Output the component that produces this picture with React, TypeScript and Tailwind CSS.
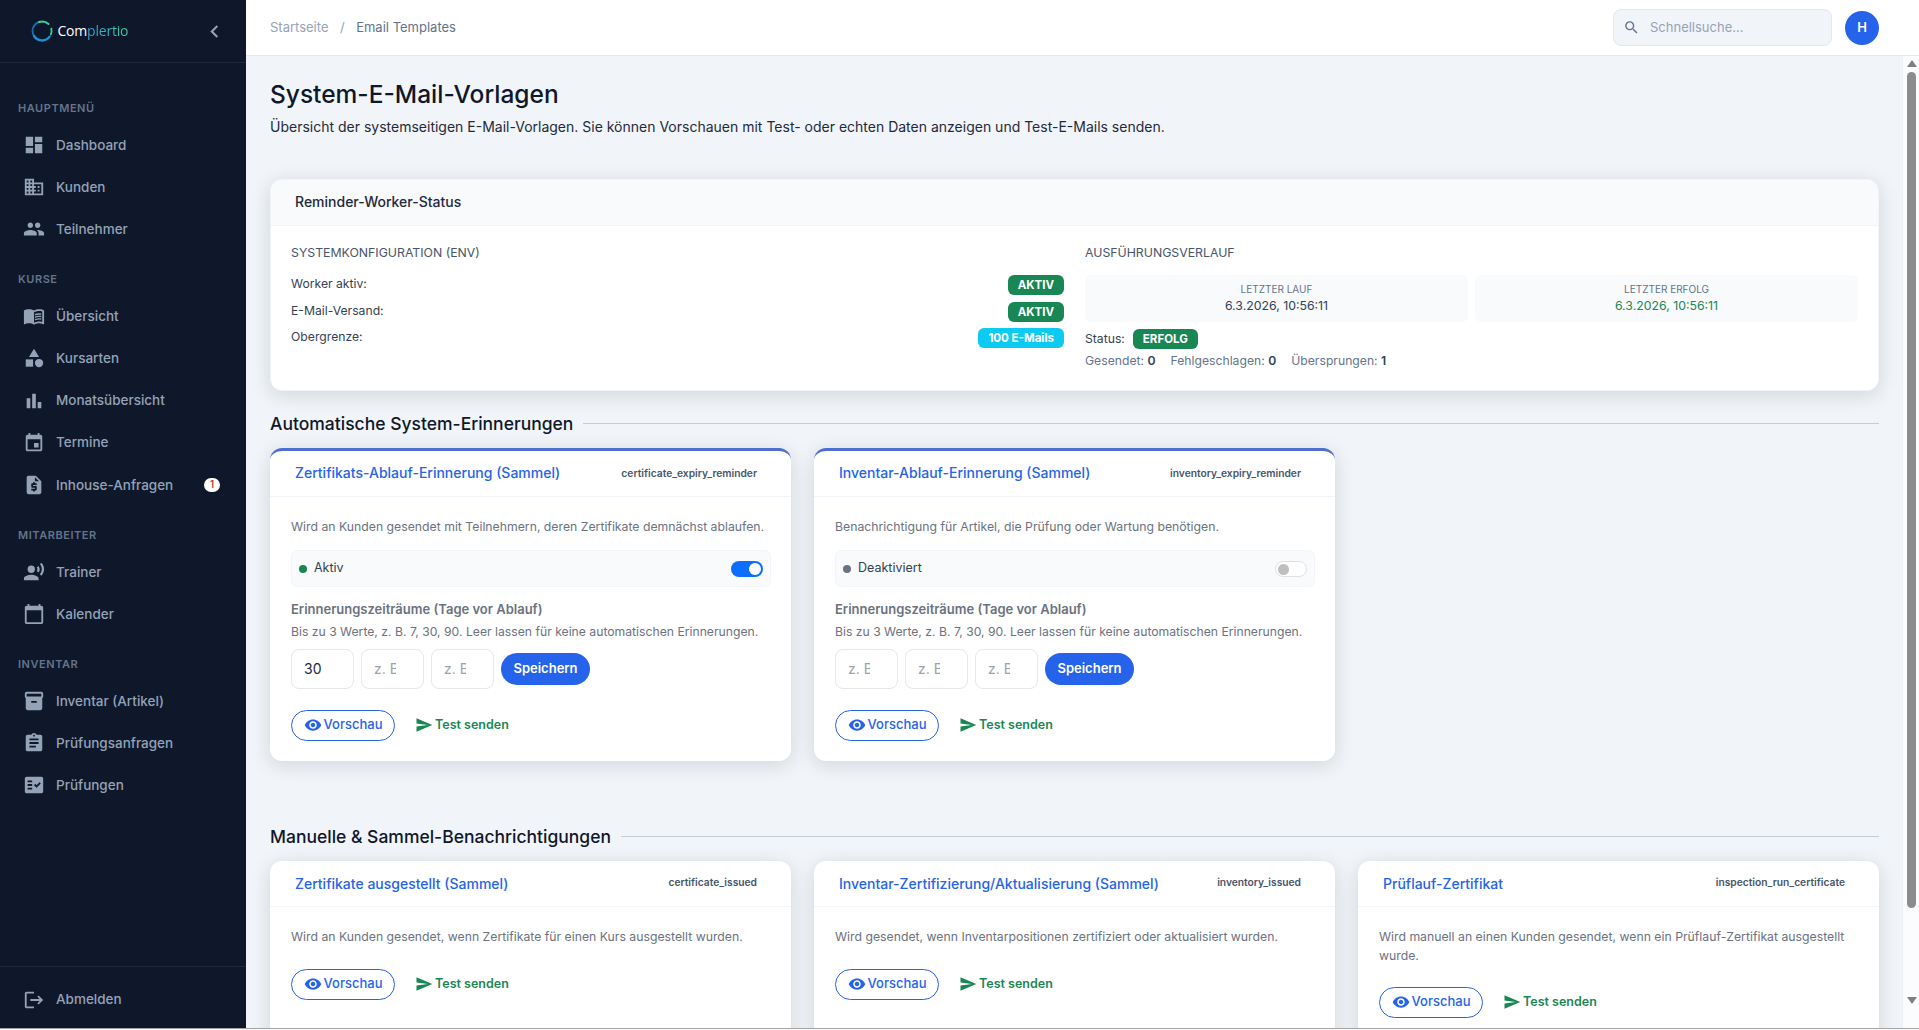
import React from "react";
import {
  MdAssignment,
  MdBarChart,
  MdCalendarToday,
  MdCategory,
  MdChevronLeft,
  MdDashboard,
  MdDomain,
  MdEvent,
  MdFactCheck,
  MdInventory2,
  MdLogout,
  MdMenuBook,
  MdPeople,
  MdRecordVoiceOver,
  MdRequestQuote,
  MdSearch,
  MdSend,
  MdVisibility,
} from "react-icons/md";
import type { IconType } from "react-icons";

interface NavItem {
  label: string;
  icon: IconType;
  badge?: string;
}

const navGroups: { title: string; items: NavItem[] }[] = [
  {
    title: "Hauptmenü",
    items: [
      { label: "Dashboard", icon: MdDashboard },
      { label: "Kunden", icon: MdDomain },
      { label: "Teilnehmer", icon: MdPeople },
    ],
  },
  {
    title: "Kurse",
    items: [
      { label: "Übersicht", icon: MdMenuBook },
      { label: "Kursarten", icon: MdCategory },
      { label: "Monatsübersicht", icon: MdBarChart },
      { label: "Termine", icon: MdEvent },
      { label: "Inhouse-Anfragen", icon: MdRequestQuote, badge: "1" },
    ],
  },
  {
    title: "Mitarbeiter",
    items: [
      { label: "Trainer", icon: MdRecordVoiceOver },
      { label: "Kalender", icon: MdCalendarToday },
    ],
  },
  {
    title: "Inventar",
    items: [
      { label: "Inventar (Artikel)", icon: MdInventory2 },
      { label: "Prüfungsanfragen", icon: MdAssignment },
      { label: "Prüfungen", icon: MdFactCheck },
    ],
  },
];

const Logo = () => (
  <div className="flex items-center gap-[4.5px]">
    <svg width="22" height="22" viewBox="0 0 22 22" fill="none">
      <path d="M7.5 2.1A9.5 9.5 0 0 0 3 16" stroke="#1c6ea8" strokeWidth="1.8" strokeLinecap="round" />
      <path d="M3 16A9.5 9.5 0 0 0 18.5 16.8" stroke="#1f8fd0" strokeWidth="2.4" strokeLinecap="round" />
      <path d="M8 2A9.5 9.5 0 0 1 17.5 4" stroke="#34d399" strokeWidth="2" strokeLinecap="round" />
      <path d="M20.3 8.5A9.5 9.5 0 0 1 19.8 14.5" stroke="#34d399" strokeWidth="1.8" strokeLinecap="round" />
    </svg>
    <span className="font-['Open_Sans',sans-serif] text-[14px] leading-none tracking-[-0.2px] text-white">
      Com
      <span className="bg-gradient-to-r from-[#3b9bd8] to-[#34d399] bg-clip-text text-transparent">plertio</span>
    </span>
  </div>
);

const Sidebar = () => (
  <aside className="flex h-full w-[246px] shrink-0 flex-col bg-[#0f172a]">
    <div className="flex h-[63px] shrink-0 items-center justify-between border-b border-[#1e293b] pl-[31px] pr-[19px]">
      <Logo />
      <MdChevronLeft className="h-[25px] w-[25px] text-[#94a3b8]" />
    </div>
    <nav className="flex-1 pt-[37px]">
      {navGroups.map((group) => (
        <div key={group.title} className="mb-[21px]">
          <div className="mb-[7px] pl-[18px] text-[11px] font-semibold uppercase leading-[17px] tracking-[0.55px] text-[#64748b]">
            {group.title}
          </div>
          {group.items.map((item) => (
            <div key={item.label} className="flex h-[42.1px] items-center pl-[23px] pr-[26px] text-[13.5px] font-medium text-[#94a3b8]">
              <item.icon className="mr-[11px] h-[22px] w-[22px] shrink-0" />
              <span className="flex-1">{item.label}</span>
              {item.badge && (
                <span className="flex h-[14px] w-[16px] items-center justify-center rounded-full bg-white text-[10px] font-medium text-[#b91c1c]">
                  {item.badge}
                </span>
              )}
            </div>
          ))}
        </div>
      ))}
    </nav>
    <div className="flex h-[62px] shrink-0 items-center border-t border-[#1e293b] pl-[23px] pt-[4px] text-[13.5px] font-medium text-[#94a3b8]">
      <MdLogout className="mr-[11px] h-[22px] w-[22px]" />
      Abmelden
    </div>
  </aside>
);

const Header = () => (
  <header className="flex h-[56px] shrink-0 items-center justify-between border-b border-[#e2e8f0] bg-white pl-[24px] pr-[40px]">
    <div className="flex items-center text-[13px] text-[#94a3b8]">
      <span>Startseite</span>
      <span className="mx-[11.5px]">/</span>
      <span className="text-[#64748b]">Email Templates</span>
    </div>
    <div className="flex items-center gap-[13px]">
      <div className="flex h-[37px] w-[219px] items-center rounded-[8px] border border-[#e2e8f0] bg-[#f1f5f9] pl-[9px] text-[13px] text-[#94a3b8]">
        <MdSearch className="mr-[10px] h-[17px] w-[17px] text-[#64748b]" />
        Schnellsuche...
      </div>
      <div className="flex h-[34px] w-[34px] items-center justify-center rounded-full bg-[#2563eb] text-[13px] font-semibold text-white">
        H
      </div>
    </div>
  </header>
);

const Badge = ({ children, color = "bg-[#198754]" }: { children: React.ReactNode; color?: string }) => (
  <span className={`inline-block rounded-[6px] px-[10px] py-[3px] text-[11.5px] font-bold leading-[14px] text-white ${color}`}>
    {children}
  </span>
);

const WorkerStatus = () => (
  <section className="mb-[19px] overflow-hidden rounded-[12px] border border-[#f1f5f9] bg-white shadow-[0_4px_20px_rgba(15,23,42,0.14)]">
    <div className="flex h-[46px] items-center border-b border-[#f1f5f9] bg-[#f8fafc] pb-[3px] pl-[24px] text-[14px] font-medium text-[#1e293b]">
      Reminder-Worker-Status
    </div>
    <div className="grid h-[164px] grid-cols-2 gap-x-[21px] px-[20px] pt-[18px]">
      <div>
        <div className="mb-[13px] text-[12.3px] uppercase leading-[18px] text-[#475569]">Systemkonfiguration (ENV)</div>
        <div className="flex h-[26.5px] items-start justify-between text-[12.2px] leading-[18px] text-[#334155]">
          <span>Worker aktiv:</span>
          <Badge>AKTIV</Badge>
        </div>
        <div className="flex h-[26.5px] items-start justify-between text-[12.2px] leading-[18px] text-[#334155]">
          <span>E-Mail-Versand:</span>
          <Badge>AKTIV</Badge>
        </div>
        <div className="flex h-[26.5px] items-start justify-between text-[12.2px] leading-[18px] text-[#334155]">
          <span>Obergrenze:</span>
          <Badge color="bg-[#0dcaf0]">100 E-Mails</Badge>
        </div>
      </div>
      <div>
        <div className="mb-[13px] text-[12.3px] uppercase leading-[18px] text-[#475569]">Ausführungsverlauf</div>
        <div className="grid grid-cols-2 gap-[7px]">
          <div className="flex h-[47px] flex-col items-center justify-center rounded-[6px] bg-[#f8fafc]">
            <div className="text-[10px] uppercase leading-[15px] text-[#64748b]">Letzter Lauf</div>
            <div className="text-[12.3px] leading-[18px] text-[#334155]">6.3.2026, 10:56:11</div>
          </div>
          <div className="flex h-[47px] flex-col items-center justify-center rounded-[6px] bg-[#f8fafc]">
            <div className="text-[10px] uppercase leading-[15px] text-[#64748b]">Letzter Erfolg</div>
            <div className="text-[12.3px] leading-[18px] text-[#198754]">6.3.2026, 10:56:11</div>
          </div>
        </div>
        <div className="mt-[7px] flex items-center gap-[8px] text-[12.2px] text-[#334155]">
          Status:
          <Badge>ERFOLG</Badge>
        </div>
        <div className="mt-[3px] flex gap-[15px] text-[12.2px] leading-[18px] text-[#64748b]">
          <span>Gesendet: <b className="font-semibold text-[#334155]">0</b></span>
          <span>Fehlgeschlagen: <b className="font-semibold text-[#334155]">0</b></span>
          <span>Übersprungen: <b className="font-semibold text-[#334155]">1</b></span>
        </div>
      </div>
    </div>
  </section>
);

const SectionTitle = ({ children }: { children: React.ReactNode }) => (
  <div className="mb-[11px] flex items-center gap-[10px]">
    <h2 className="text-[17.5px] font-medium leading-[27px] text-[#0f172a]">{children}</h2>
    <div className="h-px flex-1 bg-[#c4ccd8]" />
  </div>
);

const Actions = () => (
  <div className="flex items-center gap-[7px]">
    <button className="flex h-[31px] w-[104px] items-center justify-center gap-[2px] rounded-full border border-[#2563eb] text-[13px] font-medium text-[#2563eb]">
      <MdVisibility className="h-[18px] w-[18px]" />
      Vorschau
    </button>
    <button className="flex h-[31px] items-center gap-[2px] px-[13px] text-[12.5px] font-semibold text-[#198754]">
      <MdSend className="h-[18px] w-[18px]" />
      Test senden
    </button>
  </div>
);

interface CardProps {
  title: string;
  code: string;
  text: string;
  accent?: boolean;
  children?: React.ReactNode;
}

const TemplateCard = ({ title, code, text, accent, children }: CardProps) => (
  <div
    className={`flex flex-col overflow-hidden rounded-[12px] bg-white shadow-[0_4px_20px_rgba(15,23,42,0.14)] ${
      accent ? "border-t-[3px] border-[#4f6fd0]" : ""
    }`}
  >
    <div className="flex h-[46px] shrink-0 items-center justify-between border-b border-[#f1f5f9] pl-[25px] pr-[34px]">
      <h3 className={`text-[14px] font-medium text-[#2563eb] ${accent ? "-mt-[2px]" : ""}`}>{title}</h3>
      <span className="text-[10.25px] font-semibold text-[#475569]">{code}</span>
    </div>
    <div className="pl-[21px] pr-[20px] pt-[20px]">
      <p className="mb-[14px] text-[12.25px] leading-[19px] text-[#6b7280]">{text}</p>
      {children}
    </div>
  </div>
);

const ReminderSettings = ({ on, values }: { on: boolean; values: string[] }) => (
  <div>
    <div className="mb-[13px] flex h-[37px] items-center justify-between rounded-[6px] border border-[#f1f5f9] bg-[#f8fafc] pl-[7px] pr-[7px]">
      <div className="flex items-center gap-[7px] text-[12.5px] text-[#334155]">
        <span className={`h-[8px] w-[8px] rounded-full ${on ? "bg-[#198754]" : "bg-[#6b7280]"}`} />
        <span className="-mt-[1px]">{on ? "Aktiv" : "Deaktiviert"}</span>
      </div>
      <span
        className={`mt-[1px] flex h-[16px] w-[32px] items-center rounded-full px-[2px] ${
          on ? "justify-end bg-[#0d6efd]" : "justify-start border border-[#dee2e6] bg-white"
        }`}
      >
        <span className={`rounded-full ${on ? "h-[12px] w-[12px] bg-white" : "h-[11px] w-[11px] bg-[#bfbfbf]"}`} />
      </span>
    </div>
    <div className="text-[13px] font-semibold leading-[19.5px] text-[#6b7280]">Erinnerungszeiträume (Tage vor Ablauf)</div>
    <div className="mb-[8px] mt-[3px] text-[12.2px] leading-[18px] text-[#6b7280]">
      Bis zu 3 Werte, z. B. 7, 30, 90. Leer lassen für keine automatischen Erinnerungen.
    </div>
    <div className="mb-[21px] flex items-center gap-[7px]">
      {values.map((value, i) => (
        <input
          key={i}
          type="number"
          defaultValue={value}
          placeholder="z. B. 7"
          className="h-[40px] w-[63px] rounded-[8px] border border-[#e5e7eb] bg-white px-[12px] text-[14px] text-[#1e293b] outline-none placeholder:text-[#9ca3af]"
        />
      ))}
      <button className="h-[32px] w-[89px] rounded-full bg-[#2563eb] text-[13px] font-semibold text-white">Speichern</button>
    </div>
  </div>
);

const Scrollbar = () => (
  <div className="flex w-[17px] shrink-0 flex-col items-center border-l border-[#eef2f7] bg-[#fafcfe] pl-[1px] pt-[4px]">
    <span className="h-0 w-0 border-x-[5px] border-b-[7px] border-x-transparent border-b-[#808080]" />
    <span className="mt-[5px] h-[836px] w-[9px] rounded-full bg-[#8c8c8c]" />
    <span className="mb-[24px] mt-auto h-0 w-0 border-x-[5px] border-t-[7px] border-x-transparent border-t-[#808080]" />
  </div>
);

export default function App() {
  return (
    <div className="flex h-[1030px] w-full flex-col overflow-hidden bg-white font-['Inter',sans-serif]">
      <div className="flex h-[1028px] shrink-0 bg-[#f1f5f9]">
        <Sidebar />
        <div className="flex min-w-0 flex-1 flex-col">
          <Header />
          <div className="flex min-h-0 flex-1">
            <main className="min-w-0 flex-1 overflow-hidden pl-[24px] pr-[23px] pt-[20px]">
              <h1 className="text-[24.5px] font-medium leading-[36px] text-[#0f172a]">System-E-Mail-Vorlagen</h1>
              <p className="mb-[42px] mt-[4px] text-[14px] leading-[21px] text-[#1e293b]">
                Übersicht der systemseitigen E-Mail-Vorlagen. Sie können Vorschauen mit Test- oder echten Daten anzeigen und Test-E-Mails senden.
              </p>
              <WorkerStatus />
              <SectionTitle>Automatische System-Erinnerungen</SectionTitle>
              <div className="mb-[62px] grid grid-cols-3 gap-[23px]">
                <TemplateCard
                  accent
                  title="Zertifikats-Ablauf-Erinnerung (Sammel)"
                  code="certificate_expiry_reminder"
                  text="Wird an Kunden gesendet mit Teilnehmern, deren Zertifikate demnächst ablaufen."
                >
                  <ReminderSettings on values={["30", "", ""]} />
                  <div className="pb-[20px]"><Actions /></div>
                </TemplateCard>
                <TemplateCard
                  accent
                  title="Inventar-Ablauf-Erinnerung (Sammel)"
                  code="inventory_expiry_reminder"
                  text="Benachrichtigung für Artikel, die Prüfung oder Wartung benötigen."
                >
                  <ReminderSettings on={false} values={["", "", ""]} />
                  <div className="pb-[20px]"><Actions /></div>
                </TemplateCard>
              </div>
              <SectionTitle>Manuelle &amp; Sammel-Benachrichtigungen</SectionTitle>
              <div className="grid grid-cols-3 gap-[23px]">
                <TemplateCard
                  title="Zertifikate ausgestellt (Sammel)"
                  code="certificate_issued"
                  text="Wird an Kunden gesendet, wenn Zertifikate für einen Kurs ausgestellt wurden."
                >
                  <div className="mt-[23px] pb-[40px]"><Actions /></div>
                </TemplateCard>
                <TemplateCard
                  title="Inventar-Zertifizierung/Aktualisierung (Sammel)"
                  code="inventory_issued"
                  text="Wird gesendet, wenn Inventarpositionen zertifiziert oder aktualisiert wurden."
                >
                  <div className="mt-[23px] pb-[40px]"><Actions /></div>
                </TemplateCard>
                <TemplateCard
                  title="Prüflauf-Zertifikat"
                  code="inspection_run_certificate"
                  text="Wird manuell an einen Kunden gesendet, wenn ein Prüflauf-Zertifikat ausgestellt wurde."
                >
                  <div className="mt-[22px] pb-[40px]"><Actions /></div>
                </TemplateCard>
              </div>
            </main>
            <Scrollbar />
          </div>
        </div>
      </div>
      <div className="h-px shrink-0 bg-[#a3a3a3]" />
    </div>
  );
}
